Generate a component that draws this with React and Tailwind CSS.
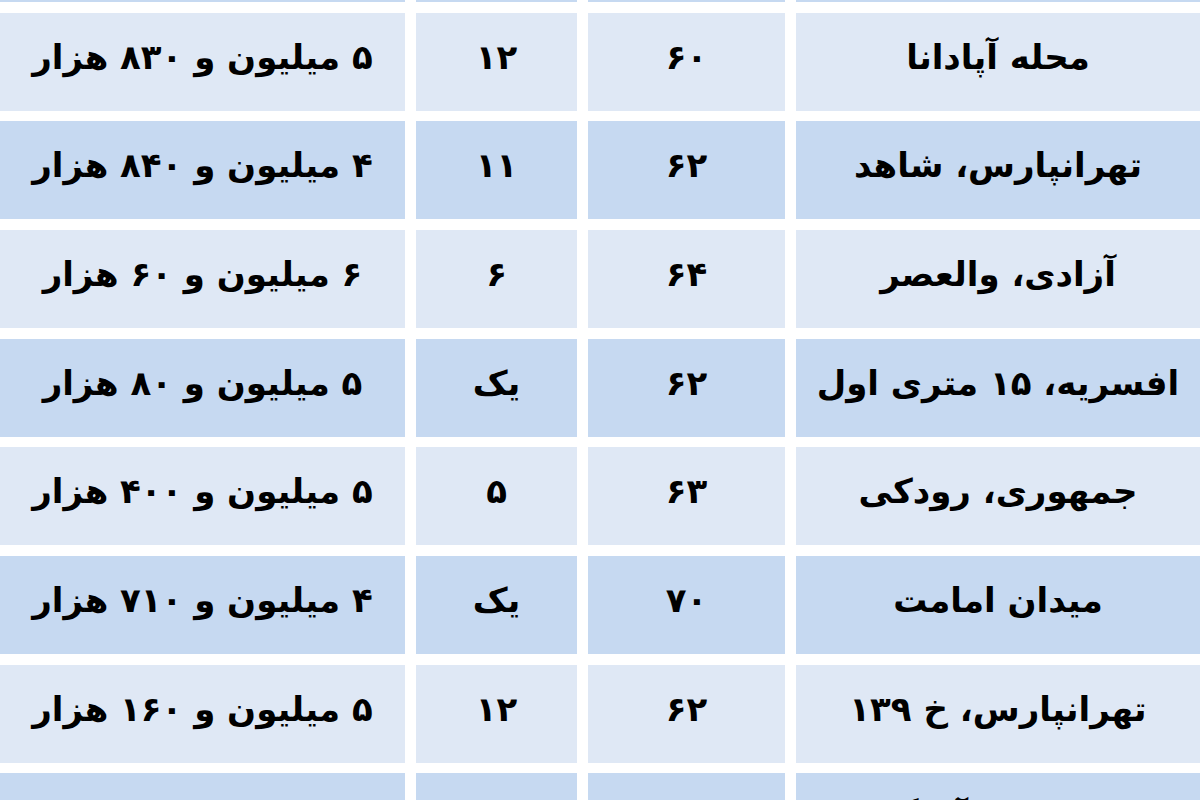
const ROWS = [
  { loc: '', area: '', age: '', price: '', dark: true },
  { loc: 'محله آپادانا', area: '۶۰', age: '۱۲', price: '۵ میلیون و ۸۳۰ هزار', dark: false },
  { loc: 'تهرانپارس، شاهد', area: '۶۲', age: '۱۱', price: '۴ میلیون و ۸۴۰ هزار', dark: true },
  { loc: 'آزادی، والعصر', area: '۶۴', age: '۶', price: '۶ میلیون و ۶۰ هزار', dark: false },
  { loc: 'افسریه، ۱۵ متری اول', area: '۶۲', age: 'یک', price: '۵ میلیون و ۸۰ هزار', dark: true },
  { loc: 'جمهوری، رودکی', area: '۶۳', age: '۵', price: '۵ میلیون و ۴۰۰ هزار', dark: false },
  { loc: 'میدان امامت', area: '۷۰', age: 'یک', price: '۴ میلیون و ۷۱۰ هزار', dark: true },
  { loc: 'تهرانپارس، خ ۱۳۹', area: '۶۲', age: '۱۲', price: '۵ میلیون و ۱۶۰ هزار', dark: false },
  { loc: 'پیروزی، آهنگ', area: '۶۵', age: 'یک', price: '۴ میلیون و ۹۵۰ هزار', dark: true },
]

function Cell({ children, dark }) {
  return (
    <div
      dir="rtl"
      className={`h-[98px] flex items-center justify-center text-[34px] font-bold text-black leading-none pb-[10px] ${dark ? 'bg-[#c6d9f1]' : 'bg-[#dfe8f5]'}`}
    >
      {children}
    </div>
  )
}

export default function App() {
  return (
    <div className="w-[1200px] h-[800px] overflow-hidden bg-white" style={{ fontFamily: '"DejaVu Sans", "Noto Sans", sans-serif' }}>
      <div className="-mt-[96px] grid grid-cols-[405px_161px_197px_404px] gap-x-[11px] gap-y-[10.67px]">
        {ROWS.map((r, i) => (
          <div key={i} className="contents">
            <Cell dark={r.dark}>{r.price}</Cell>
            <Cell dark={r.dark}>{r.age}</Cell>
            <Cell dark={r.dark}>{r.area}</Cell>
            <Cell dark={r.dark}>{r.loc}</Cell>
          </div>
        ))}
      </div>
    </div>
  )
}
